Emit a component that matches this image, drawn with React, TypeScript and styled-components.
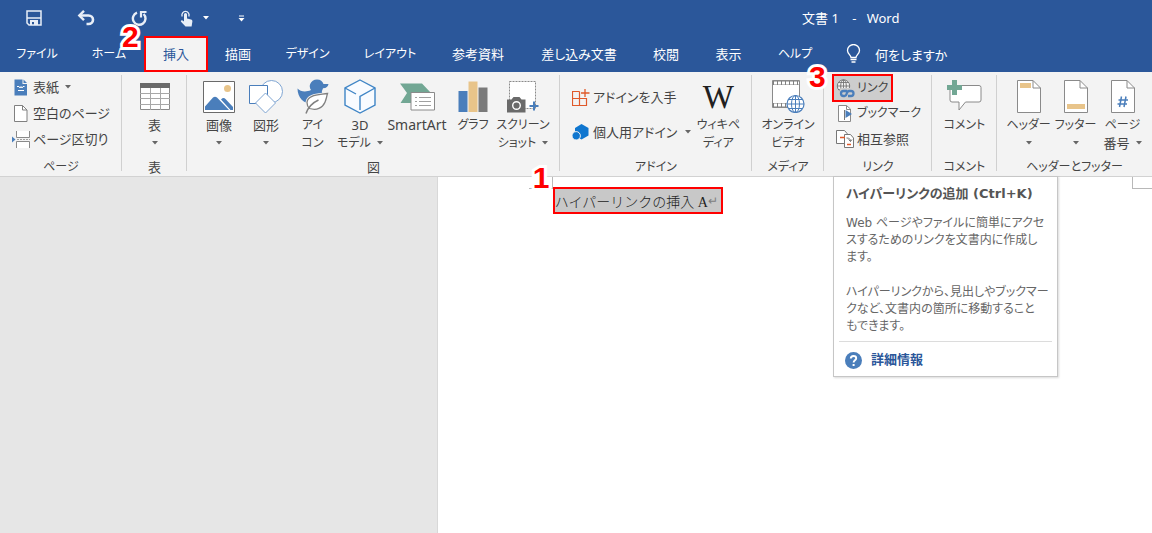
import React from "react";
import styled, { createGlobalStyle, css } from "styled-components";

const UI_FONT = `"Noto Sans", "Noto Sans CJK JP", sans-serif`;
const BLUE = "#2b579a";
const STEEL = "#4a7ebb";
const INK = "#444444";
const GREEN = "#72a794";
const SAND = "#e8c48a";

/* Labels written only in kana are set one size smaller than those with kanji. */
const labelSize = (text: string) => {
  if (/^[\u3040-\u30ff]+$/.test(text)) return 12;
  if (/^[A-Za-z]+$/.test(text)) return 14;
  return 13;
};

const GlobalStyle = createGlobalStyle`
  *, *::before, *::after { box-sizing: border-box; }
  body {
    margin: 0;
    font-family: ${UI_FONT};
    font-size: 13px;
    color: ${INK};
    background: #e6e6e6;
    overflow-x: hidden;
  }
  button { font: inherit; color: inherit; font-feature-settings: inherit; }
`;

const Window = styled.div`
  display: flex;
  flex-direction: column;
  min-height: 100vh;
  font-feature-settings: "palt";
`;

const plainButton = css`
  display: flex;
  align-items: center;
  border: 0;
  margin: 0;
  padding: 0;
  background: transparent;
  white-space: nowrap;
  cursor: pointer;
`;

/* Title bar */

const TitleBar = styled.header`
  display: grid;
  grid-template-columns: 802px 1fr;
  align-items: center;
  height: 36px;
  background: ${BLUE};
  color: #ffffff;
`;

const QuickAccess = styled.div`
  display: flex;
  height: 36px;
  padding-left: 8px;
`;

const QuickButton = styled.button<{ $width: number }>`
  ${plainButton}
  flex: 0 0 ${(p) => p.$width}px;
  justify-content: center;
  gap: 10px;
`;

const DocumentTitle = styled.h1`
  margin: 0;
  font-size: 13px;
  font-weight: 400;
  line-height: 18px;
  white-space: pre;
`;

/* Tabs */

const TabBar = styled.nav`
  display: flex;
  height: 36px;
  background: ${BLUE};
  color: #ffffff;
`;

const TabSlot = styled.div<{ $width: number }>`
  position: relative;
  display: flex;
  flex: 0 0 ${(p) => p.$width}px;
`;

const Tab = styled.button<{ $active?: boolean; $size: number }>`
  ${plainButton}
  flex: 1;
  justify-content: center;
  font-size: ${(p) => p.$size}px;
  line-height: 18px;
  ${(p) =>
    p.$active &&
    css`
      border: 2px solid #ff0000;
      background: #f3f3f3;
      color: ${BLUE};
    `}
`;

const TellMe = styled.button`
  ${plainButton}
  gap: 14px;
  padding-left: 16px;
`;

const StepNumber = styled.span<{ $left: number; $top: number }>`
  position: absolute;
  z-index: 3;
  left: ${(p) => p.$left}px;
  top: ${(p) => p.$top}px;
  font-family: "Liberation Sans", sans-serif;
  font-size: 30px;
  font-weight: 700;
  line-height: 30px;
  color: #ff0000;
  -webkit-text-stroke: 6px #ffffff;
  paint-order: stroke fill;
  stroke-linejoin: round;
  pointer-events: none;
`;

/* Ribbon */

const Ribbon = styled.div`
  display: flex;
  height: 105px;
  background: #f3f3f3;
  border-bottom: 1px solid #d2d2d2;
`;

const Group = styled.section<{ $width?: number }>`
  position: relative;
  display: flex;
  flex-direction: column;
  flex: ${(p) => (p.$width ? `0 0 ${p.$width}px` : "1 0 155px")};
  padding-top: 2px;

  &:not(:last-child)::after {
    content: "";
    position: absolute;
    right: 0;
    top: 3px;
    bottom: 5px;
    width: 1px;
    background: #d0d0d0;
  }
`;

const GroupBody = styled.div<{ $pad?: number; $center?: boolean }>`
  display: flex;
  flex: 1;
  padding-left: ${(p) => p.$pad ?? 0}px;
  justify-content: ${(p) => (p.$center ? "center" : "flex-start")};
`;

const GroupTitle = styled.h2<{ $size: number }>`
  margin: 0;
  height: 18px;
  font-size: ${(p) => p.$size}px;
  font-weight: 400;
  line-height: 18px;
  text-align: center;
  white-space: nowrap;
`;

const Stack = styled.div<{ $roomy?: boolean }>`
  display: flex;
  flex-direction: column;
  align-items: flex-start;
  gap: ${(p) => (p.$roomy ? 9 : 0)}px;
  padding-top: ${(p) => (p.$roomy ? 10 : 0)}px;
`;

const SmallButton = styled.button<{ $size?: number }>`
  ${plainButton}
  height: 26px;
  font-size: ${(p) => p.$size ?? 13}px;
  line-height: 18px;
`;

const SmallIcon = styled.span`
  display: flex;
  flex: 0 0 21px;
`;

const LinkAnchor = styled.div`
  position: relative;
  width: 61px;
  height: 26px;
`;

const LinkButton = styled(SmallButton)`
  width: 61px;
  height: 28px;
  padding-left: 2px;
  border: 2px solid #ff0000;
  background: #cdcdcd;
`;

const LinkRow = styled(SmallButton)`
  padding-left: 4px;
`;

const BigButton = styled.button<{ $width: number }>`
  ${plainButton}
  flex: 0 0 ${(p) => p.$width}px;
  flex-direction: column;
  height: 82px;
`;

const BigIcon = styled.span`
  display: flex;
  align-items: center;
  justify-content: center;
  height: 42px;
  padding-top: 3px;
`;

const BigLabel = styled.span<{ $size?: number }>`
  display: flex;
  align-items: center;
  justify-content: center;
  gap: 6px;
  height: 18px;
  font-size: ${(p) => p.$size ?? 13}px;
  line-height: 18px;
`;

const WikiMark = styled.span`
  font-family: "Liberation Serif", serif;
  font-size: 33px;
  line-height: 36px;
  color: #202020;
`;

const ArrowGlyph = styled.svg<{ $gap?: number }>`
  flex: none;
  margin-left: ${(p) => p.$gap ?? 0}px;
`;

/* Tooltip */

const Tooltip = styled.aside`
  position: absolute;
  z-index: 2;
  left: 1px;
  top: 102px;
  width: 225px;
  height: 201px;
  padding: 8px 5px;
  background: #ffffff;
  border: 1px solid #c6c6c6;
  box-shadow: 1px 1px 2px rgba(0, 0, 0, 0.15);
  color: #666666;
  font-family: "DejaVu Sans", "Noto Sans CJK JP", sans-serif;
  white-space: nowrap;
`;

const TooltipTitle = styled.h3`
  margin: 0 7px 12px;
  font-size: 13px;
  font-weight: 700;
  line-height: 18px;
  color: #555555;
`;

const TooltipText = styled.p`
  margin: 0 7px 18px;
  font-size: 12px;
  line-height: 17px;
`;

const TooltipFooter = styled.div`
  display: flex;
  align-items: center;
  gap: 9px;
  margin-top: -12px;
  padding: 9px 6px 0;
  border-top: 1px solid #dcdcdc;
`;

const MoreLink = styled.a`
  font-size: 13px;
  font-weight: 700;
  line-height: 18px;
  color: ${BLUE};
  text-decoration: none;
`;

/* Document area */

const Workspace = styled.main`
  display: flex;
  flex: 1;
  background: #e6e6e6;
`;

const Gutter = styled.div`
  flex: 0 0 38%;
  border-right: 1px solid #d8d8d8;
`;

const Page = styled.article`
  display: grid;
  grid-template-columns: 91px 24px 1fr 20px;
  grid-template-rows: 12px 1fr;
  flex: 1;
  background: #ffffff;
`;

const CropMark = styled.span<{ $side: "left" | "right" }>`
  grid-row: 1;
  grid-column: ${(p) => (p.$side === "left" ? 2 : 4)};
  border-bottom: 1px solid #b8b8b8;
  border-${(p) => (p.$side === "left" ? "right" : "left")}: 1px solid #b8b8b8;
`;

const TextArea = styled.div`
  position: relative;
  grid-row: 1 / 3;
  grid-column: 3;
  padding-top: 10px;
`;

const Selected = styled.p`
  display: flex;
  align-items: center;
  width: 170px;
  height: 27px;
  margin: 0;
  border: 2px solid #ff0000;
  background: #c8c8c8;
  color: #222222;
  font-family: "Liberation Serif", "Noto Sans CJK JP", serif;
  font-size: 14px;
  font-weight: 300;
  font-feature-settings: normal;
  white-space: nowrap;
`;

const ReturnMark = styled.span`
  font-family: "DejaVu Sans", sans-serif;
  font-size: 12px;
  color: #808080;
`;

/* Icons */

const Arrow = ({ gap, color = "#666" }: { gap?: number; color?: string }) => (
  <ArrowGlyph $gap={gap} width="6" height="4" viewBox="0 0 6 4" aria-hidden>
    <path d="M0 0h6L3 3.5z" fill={color} />
  </ArrowGlyph>
);

const Svg = ({ w, h, children }: { w: number; h: number; children: React.ReactNode }) => (
  <svg width={w} height={h} viewBox={`0 0 ${w} ${h}`} fill="none" aria-hidden>
    {children}
  </svg>
);

const SaveIcon = () => (
  <Svg w={16} h={16}>
    <path d="M1 1h14v14H3l-2-2z" stroke="#e8eef7" strokeWidth="1.5" />
    <path d="M1 8h14" stroke="#e8eef7" strokeWidth="1.5" />
    <path d="M4 10h8v5H8v-3H6v3H4z" fill="#e8eef7" />
  </Svg>
);

const UndoIcon = () => (
  <Svg w={18} h={16}>
    <path d="M2 5.500h9.500c2.500 0 4.500 1.800 4.500 4.300s-2 4.200-4.500 4.200H9.500" stroke="#e8eef7" strokeWidth="2.600" />
    <path d="M7 0.800 2.300 5.500 7 10.200" stroke="#e8eef7" strokeWidth="2.400" />
  </Svg>
);

const RedoIcon = () => (
  <Svg w={17} h={17}>
    <path d="M6 2.600A6.300 6.300 0 1 0 12.600 4" stroke="#e8eef7" strokeWidth="2.400" />
    <path d="M10 7.500V2h5.500" stroke="#e8eef7" strokeWidth="2.200" />
  </Svg>
);

const TouchIcon = () => (
  <Svg w={13} h={17}>
    <path d="M2.200 6.500A3.600 3.600 0 1 1 8.800 6.500" stroke="#e8eef7" strokeWidth="1.300" />
    <path d="M4 4.500a1.500 1.500 0 0 1 3 0v4l4 .9c1 .3 1.500 1 1.400 2L11.600 16.500H5.500L1 11.800c-.5-.9.500-1.900 1.500-1.300l1.500 1z" fill="#e8eef7" />
  </Svg>
);

const CustomizeIcon = () => (
  <Svg w={7} h={7}>
    <path d="M1 1h5" stroke="#fff" />
    <path d="M0.500 3h6L3.500 6.500z" fill="#fff" />
  </Svg>
);

const BulbIcon = () => (
  <Svg w={15} h={20}>
    <path d="M5 13.500c0-2.500-3.500-3.500-3.500-7a6 6 0 0 1 12 0c0 3.500-3.500 4.500-3.500 7z" stroke="#fff" strokeWidth="1.300" />
    <path d="M4.500 15.500h6M5.500 18h4" stroke="#fff" strokeWidth="1.500" />
  </Svg>
);

const CoverIcon = () => (
  <Svg w={16} h={17}>
    <path d="M2.500 0.500h8v4.500h4.500v11.500H2.500z" fill={STEEL} />
    <path d="M11.500 0.500 15 4h-3.500z" fill={STEEL} />
    <path d="M5 7.500h2l1 1.500 1-1.500 1 1.500 1-1.500h1.500M6 11.500h6" stroke="#fff" strokeWidth="1" />
  </Svg>
);

const BlankIcon = () => (
  <Svg w={16} h={17}>
    <path d="M2.500 0.500h8L15 5v11.500H2.500z" fill="#fff" stroke="#808080" />
    <path d="M10.500 0.500V5H15" stroke="#808080" />
  </Svg>
);

const BreakIcon = () => (
  <Svg w={19} h={17}>
    <path d="M4.500 0v6.500h13V0M4.500 17v-6.500h13V17" fill="#fff" stroke="#8a8a8a" />
    <path d="M5 8.500h13" stroke="#a0a0a0" strokeDasharray="2 1" />
    <path d="M0 5.500 3.500 8.500 0 11.500z" fill={STEEL} />
  </Svg>
);

const TableIcon = () => (
  <Svg w={30} h={27}>
    <path d="M0.500 0.500h29v26H0.500z" fill="#fff" stroke="#8a8a8a" />
    <path d="M0 0h30v5H0z" fill="#6a6a6a" />
    <path d="M0 10.500h30M0 15.500h30M0 21.500h30M10.500 5v22M20.500 5v22" stroke="#a8a8a8" />
  </Svg>
);

const PictureIcon = () => (
  <Svg w={32} h={32}>
    <path d="M0.500 0.500h31v31H0.500z" fill="#fff" stroke="#6a6a6a" />
    <circle cx="24.500" cy="7.500" r="3.500" fill={SAND} />
    <path d="M2 29v-3.500l8-9q2-1.500 4 0L26 29zM18 18.500q2.500-2.500 4.500-.5L30 26v3h-2.500z" fill={STEEL} />
  </Svg>
);

const ShapesIcon = () => (
  <Svg w={34} h={34}>
    <circle cx="22.500" cy="11.500" r="11" fill="#fff" stroke="#7fa5d2" />
    <path d="M0.500 5.500h18v18h-18z" fill="#fff" stroke={STEEL} />
    <path d="M16.500 13 26.500 23 16.500 33 6.500 23z" fill="#fff" stroke="#7fa5d2" />
  </Svg>
);

const DuckIcon = () => (
  <Svg w={32} h={35}>
    <path d="M20 0.500c3.400 0 5.700 2 6.500 4.500h5c-.5 2.500-2 4.300-5.500 4.300-.5 1.700-1.500 2.700-1 4.200l2 4L15 25c-8-.5-14.500-6-14.500-15.500 3 3 8 4 13.500 1.500-1.500-2-1.500-4.500-.8-6C14.200 2.300 16.800.5 20 .5z" fill={STEEL} />
    <path d="M30.500 14.500C22 16 10.500 15.500 10 23.500c0 2.500.8 4.500 2.500 6 5 1.500 10 .5 13-2.500 4-4 3.500-8 5-12.500z" fill="#fff" stroke="#f3f3f3" strokeWidth="3" />
    <path d="M30.500 14.500C22 16 10.500 15.500 10 23.500c0 2.500.8 4.500 2.500 6 5 1.500 10 .5 13-2.500 4-4 3.500-8 5-12.500z" fill="#fff" stroke="#808080" strokeWidth="1.300" />
    <path d="M9 34.500C10.500 30 15 24 21.500 21" stroke="#808080" strokeWidth="1.500" />
  </Svg>
);

const CubeIcon = () => (
  <Svg w={32} h={35}>
    <path d="M16 1 31 9v17L16 34 1 26V9z" fill="#f8fbff" stroke="#3f85c6" strokeWidth="1.400" />
    <path d="M1 9l11 6M31 9l-15 8.500V31" stroke="#3f85c6" strokeWidth="1.400" />
  </Svg>
);

const SmartArtIcon = () => (
  <Svg w={35} h={28}>
    <path d="M0 0.500h22l9 9.500-6 10H0.500L7 10z" fill={GREEN} />
    <path d="M11 9.500h23.500v17.500H11z" fill="#fff" stroke="#8a8a8a" />
    <path d="M15 14.500h2M19 14.500h12M15 18.500h2M19 18.500h12M15 22.500h2M19 22.500h12" stroke="#a0a0a0" />
  </Svg>
);

const ChartIcon = () => (
  <Svg w={30} h={31}>
    <path d="M0.500 10h9v21h-9z" fill={STEEL} />
    <path d="M10.500 0.500h9V31h-9z" fill={SAND} />
    <path d="M20.500 6.500h9V31h-9z" fill="#7a7a7a" />
  </Svg>
);

const ScreenshotIcon = () => (
  <Svg w={32} h={32}>
    <path d="M2.500 0.500h26v27h-26z" fill="#fff" stroke="#8a8a8a" strokeDasharray="2 1" />
    <path d="M0 18.500h4.500l2-2.500h6l2 2.500H18.500v13H0z" fill="#6a6a6a" />
    <circle cx="9.500" cy="24.500" r="3.800" stroke="#fff" strokeWidth="1.400" />
    <path d="M27 20.500v9M22.500 25h9" stroke={STEEL} strokeWidth="2" />
  </Svg>
);

const StoreIcon = () => (
  <Svg w={18} h={17}>
    <path d="M7.500 2.500h-7v14h14v-7H0.500M7.500 2.500v14" stroke="#e0592a" strokeWidth="1.200" />
    <path d="M13 0v8M9 4h8.500" stroke="#e0592a" strokeWidth="1.300" />
  </Svg>
);

const AddinsIcon = () => (
  <Svg w={17} h={16}>
    <path d="M9.500 0 16.500 4v7.500L9.500 15.500 3 11.500V4z" fill="#0f76cf" />
    <circle cx="4.200" cy="11.800" r="4.200" fill="#0f76cf" stroke="#f3f3f3" />
  </Svg>
);

const VideoIcon = () => (
  <Svg w={34} h={33}>
    <path d="M1.500 0.500h27v27h-27z" fill="#fff" stroke="#8a8a8a" />
    <path d="M2 3h26M2 25h26" stroke="#808080" strokeWidth="4" />
    <path d="M3 3h25M3 25h25" stroke="#fff" strokeWidth="3" strokeDasharray="3 1" />
    <circle cx="24.500" cy="24" r="8.500" fill="#fff" stroke={STEEL} strokeWidth="1.200" />
    <ellipse cx="24.500" cy="24" rx="4" ry="8.500" stroke={STEEL} />
    <path d="M24.500 15.500v17M16 24h17M17.500 19.500h14M17.500 28.500h14" stroke={STEEL} />
  </Svg>
);

const LinkIcon = () => (
  <Svg w={19} h={19}>
    <circle cx="7.500" cy="7" r="6.200" fill="#f4f4f4" stroke="#777" />
    <ellipse cx="7.500" cy="7" rx="2.800" ry="6.200" stroke="#777" />
    <path d="M7.500 1v12M1.500 7h12M2.500 3.500h10M2.500 10.500h10" stroke="#777" strokeWidth="0.900" />
    <path d="M3.500 11.500q0-2.500 3-2.500h8q3 0 3 3v6h-14z" fill="#cdcdcd" />
    <path d="M11 12H7.500a2.500 2.500 0 0 0 0 5h1c3 0 1.500-5 4.500-5h2a2.500 2.500 0 0 1 0 5H12" stroke={STEEL} strokeWidth="2.300" />
  </Svg>
);

const BookmarkIcon = () => (
  <Svg w={17} h={17}>
    <path d="M2.500 0.500h8L14.500 4v12.500h-12z" fill="#fff" stroke="#8a8a8a" />
    <path d="M10.500 0.500V4.500h4" stroke="#8a8a8a" />
    <path d="M8.500 5v10" stroke="#777" />
    <path d="M9.500 5l6.500 4-6.500 4z" fill={STEEL} />
  </Svg>
);

const CrossRefIcon = () => (
  <Svg w={19} h={18}>
    <path d="M0.500 0.500h8L11.500 4v9.500h-11z" fill="#fff" stroke="#777" />
    <path d="M8.500 4.500h6L17.500 8v9.500h-9z" fill="#fff" stroke="#777" />
    <path d="M4 7.500h5M11 14.500h4" stroke="#e0592a" strokeWidth="1.600" />
    <path d="M10.500 8c3 0 4 1 4 3.500M12.500 9.500l2 2 1.500-2" stroke="#777" />
  </Svg>
);

const CommentIcon = () => (
  <Svg w={35} h={33}>
    <path d="M4.500 5.500H32q2 0 2 2V20q0 2-2 2H18.500L12 30v-8H5q-2 0-2-2V7.500q0-2 1.500-2z" fill="#fff" stroke="#8a8a8a" />
    <path d="M7.500 0v15M0 7.500h15" stroke={GREEN} strokeWidth="5" />
  </Svg>
);

const SheetIcon = ({ kind }: { kind: "header" | "footer" | "number" }) => (
  <Svg w={24} h={33}>
    <path d="M0.500 0.500H16L23.500 8v24.500h-23z" fill="#fff" stroke="#8a8a8a" />
    <path d="M16 0.500V8h7.500" stroke="#8a8a8a" />
    {kind === "header" && <path d="M3 3h11v5H3z" fill={SAND} />}
    {kind === "footer" && <path d="M3 24h18v5H3z" fill={SAND} />}
    {kind === "number" && (
      <path d="M10.500 16.500 8.500 27M15 16.500 13 27M7.500 20h9.500M6.500 24h9.500" stroke={STEEL} strokeWidth="1.500" />
    )}
  </Svg>
);

const HelpIcon = () => (
  <Svg w={17} h={17}>
    <circle cx="8.500" cy="8.500" r="8.500" fill={STEEL} />
    <path d="M5.800 6.500c0-3.500 5.400-3.300 5.400-.2 0 2-2.600 2-2.600 4.200" stroke="#fff" strokeWidth="1.900" />
    <path d="M7.600 12h2v2h-2z" fill="#fff" />
  </Svg>
);

type BigProps = {
  width: number;
  icon: React.ReactNode;
  lines: string[];
  arrow?: "below" | "inline";
};

const Big = ({ width, icon, lines, arrow }: BigProps) => (
  <BigButton $width={width} type="button">
    <BigIcon>{icon}</BigIcon>
    {lines.map((line, i) => (
      <BigLabel key={line} $size={labelSize(line)}>
        {line}
        {arrow === "inline" && i === lines.length - 1 && <Arrow />}
      </BigLabel>
    ))}
    {arrow === "below" && (
      <BigLabel>
        <Arrow />
      </BigLabel>
    )}
  </BigButton>
);

const GroupName = ({ children }: { children: string }) => (
  <GroupTitle $size={labelSize(children)}>{children}</GroupTitle>
);

const tabs: { name: string; width: number; active?: boolean }[] = [
  { name: "ファイル", width: 74 },
  { name: "ホーム", width: 70 },
  { name: "挿入", width: 64, active: true },
  { name: "描画", width: 60 },
  { name: "デザイン", width: 79 },
  { name: "レイアウト", width: 86 },
  { name: "参考資料", width: 90 },
  { name: "差し込み文書", width: 112 },
  { name: "校閲", width: 62 },
  { name: "表示", width: 63 },
  { name: "ヘルプ", width: 70 },
];

export default function App() {
  return (
    <Window>
      <GlobalStyle />
      <TitleBar>
        <QuickAccess>
          <QuickButton $width={52} aria-label="上書き保存"><SaveIcon /></QuickButton>
          <QuickButton $width={52} aria-label="元に戻す"><UndoIcon /></QuickButton>
          <QuickButton $width={54} aria-label="繰り返し"><RedoIcon /></QuickButton>
          <QuickButton $width={56} aria-label="タッチ/マウス モード">
            <TouchIcon />
            <Arrow color="#fff" />
          </QuickButton>
          <QuickButton $width={38} aria-label="カスタマイズ"><CustomizeIcon /></QuickButton>
        </QuickAccess>
        <DocumentTitle>{"文書 1    -   Word"}</DocumentTitle>
      </TitleBar>

      <TabBar>
        {tabs.map((tab) => (
          <TabSlot key={tab.name} $width={tab.width}>
            <Tab type="button" $active={tab.active} $size={labelSize(tab.name)}>{tab.name}</Tab>
            {tab.active && <StepNumber $left={-22} $top={-14}>2</StepNumber>}
          </TabSlot>
        ))}
        <TellMe type="button">
          <BulbIcon />
          何をしますか
        </TellMe>
      </TabBar>

      <Ribbon>
        <Group $width={122}>
          <GroupBody $pad={12}>
            <Stack>
              <SmallButton><SmallIcon><CoverIcon /></SmallIcon>表紙<Arrow gap={6} /></SmallButton>
              <SmallButton><SmallIcon><BlankIcon /></SmallIcon>空白のページ</SmallButton>
              <SmallButton><SmallIcon><BreakIcon /></SmallIcon>ページ区切り</SmallButton>
            </Stack>
          </GroupBody>
          <GroupName>ページ</GroupName>
        </Group>

        <Group $width={65}>
          <GroupBody $center>
            <Big width={64} icon={<TableIcon />} lines={["表"]} arrow="below" />
          </GroupBody>
          <GroupName>表</GroupName>
        </Group>

        <Group $width={373}>
          <GroupBody $pad={8}>
            <Big width={48} icon={<PictureIcon />} lines={["画像"]} arrow="below" />
            <Big width={46} icon={<ShapesIcon />} lines={["図形"]} arrow="below" />
            <Big width={47} icon={<DuckIcon />} lines={["アイ", "コン"]} />
            <Big width={48} icon={<CubeIcon />} lines={["3D", "モデル"]} arrow="inline" />
            <Big width={66} icon={<SmartArtIcon />} lines={["SmartArt"]} />
            <Big width={46} icon={<ChartIcon />} lines={["グラフ"]} />
            <Big width={54} icon={<ScreenshotIcon />} lines={["スクリーン", "ショット"]} arrow="inline" />
          </GroupBody>
          <GroupName>図</GroupName>
        </Group>

        <Group $width={192}>
          <GroupBody $pad={12}>
            <Stack $roomy>
              <SmallButton><SmallIcon><StoreIcon /></SmallIcon>アドインを入手</SmallButton>
              <SmallButton><SmallIcon><AddinsIcon /></SmallIcon>個人用アドイン<Arrow gap={8} /></SmallButton>
            </Stack>
            <Big width={54} icon={<WikiMark>W</WikiMark>} lines={["ウィキペ", "ディア"]} />
          </GroupBody>
          <GroupName>アドイン</GroupName>
        </Group>

        <Group $width={72}>
          <GroupBody $center>
            <Big width={70} icon={<VideoIcon />} lines={["オンライン", "ビデオ"]} />
          </GroupBody>
          <GroupName>メディア</GroupName>
        </Group>

        <Group $width={108}>
          <GroupBody $pad={8}>
            <Stack>
              <LinkAnchor>
                <LinkButton $size={12} aria-describedby="link-tip">
                  <SmallIcon><LinkIcon /></SmallIcon>リンク
                </LinkButton>
                <StepNumber $left={-23} $top={-12}>3</StepNumber>
                <Tooltip id="link-tip" role="tooltip">
                  <TooltipTitle>ハイパーリンクの追加 (Ctrl+K)</TooltipTitle>
                  <TooltipText>
                    Web ページやファイルに簡単にアクセ<br />
                    スするためのリンクを文書内に作成し<br />
                    ます。
                  </TooltipText>
                  <TooltipText>
                    ハイパーリンクから、見出しやブックマー<br />
                    クなど、文書内の箇所に移動すること<br />
                    もできます。
                  </TooltipText>
                  <TooltipFooter>
                    <HelpIcon />
                    <MoreLink href="#help">詳細情報</MoreLink>
                  </TooltipFooter>
                </Tooltip>
              </LinkAnchor>
              <LinkRow $size={12}><SmallIcon><BookmarkIcon /></SmallIcon>ブックマーク</LinkRow>
              <LinkRow><SmallIcon><CrossRefIcon /></SmallIcon>相互参照</LinkRow>
            </Stack>
          </GroupBody>
          <GroupName>リンク</GroupName>
        </Group>

        <Group $width={65}>
          <GroupBody $center>
            <Big width={60} icon={<CommentIcon />} lines={["コメント"]} />
          </GroupBody>
          <GroupName>コメント</GroupName>
        </Group>

        <Group>
          <GroupBody $pad={8}>
            <Big width={47} icon={<SheetIcon kind="header" />} lines={["ヘッダー"]} arrow="below" />
            <Big width={47} icon={<SheetIcon kind="footer" />} lines={["フッター"]} arrow="below" />
            <Big width={47} icon={<SheetIcon kind="number" />} lines={["ページ", "番号"]} arrow="inline" />
          </GroupBody>
          <GroupName>ヘッダーとフッター</GroupName>
        </Group>
      </Ribbon>

      <Workspace>
        <Gutter />
        <Page>
          <CropMark $side="left" />
          <TextArea>
            <StepNumber $left={-20} $top={-14}>1</StepNumber>
            <Selected>ハイパーリンクの挿入 A<ReturnMark>↵</ReturnMark></Selected>
          </TextArea>
          <CropMark $side="right" />
        </Page>
      </Workspace>
    </Window>
  );
}
